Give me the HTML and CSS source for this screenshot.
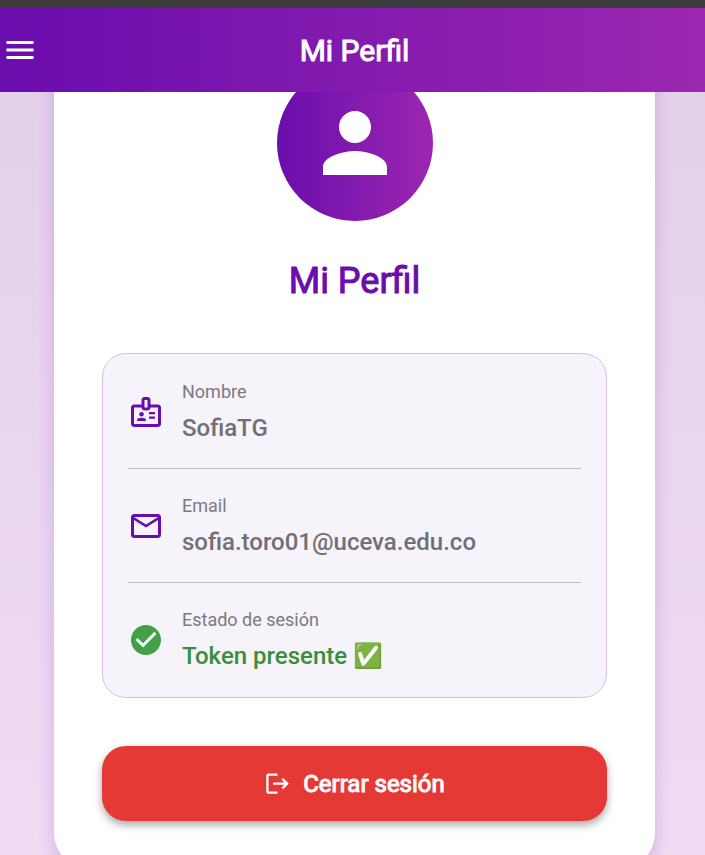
FILE: index.html
```html
<!DOCTYPE html>
<html lang="es">
<head>
<meta charset="utf-8">
<meta name="viewport" content="width=device-width, initial-scale=1">
<title>Mi Perfil</title>
<link rel="stylesheet" href="styles.css">
</head>
<body>
<div class="app">
  <header class="bar">
    <button class="menu" type="button" aria-label="Menú">
      <svg class="icon" viewBox="0 0 24 24"><path d="M3 18h18v-2H3v2zm0-5h18v-2H3v2zm0-7v2h18V6H3z"/></svg>
    </button>
    <h1 class="bar-title">Mi Perfil</h1>
  </header>
  <main class="content">
    <section class="card">
      <div class="avatar">
        <svg class="avatar-icon" viewBox="0 0 24 24"><path d="M12 12c2.21 0 4-1.79 4-4s-1.79-4-4-4-4 1.79-4 4 1.79 4 4 4zm0 2c-2.67 0-8 1.34-8 4v2h16v-2c0-2.66-5.33-4-8-4z"/></svg>
      </div>
      <h2 class="name">Mi Perfil</h2>
      <dl class="info">
        <div class="row">
          <svg class="icon" viewBox="0 0 24 24"><path d="M20 7h-5V4c0-1.1-.9-2-2-2h-2c-1.1 0-2 .9-2 2v3H4c-1.1 0-2 .9-2 2v11c0 1.1.9 2 2 2h16c1.1 0 2-.9 2-2V9c0-1.1-.9-2-2-2zm-9-3h2v5h-2V4zm9 16H4V9h5c0 1.1.9 2 2 2h2c1.1 0 2-.9 2-2h5v11z"/><circle cx="9" cy="13.5" r="1.5"/><path d="M11.08 16.18C10.44 15.9 9.74 15.75 9 15.75s-1.44.15-2.08.43C6.36 16.42 6 16.96 6 17.57V18h6v-.43c0-.61-.36-1.15-.92-1.39zM14 12h4v1.5h-4zM14 15h4v1.5h-4z"/></svg>
          <div class="field"><dt>Nombre</dt><dd>SofiaTG</dd></div>
        </div>
        <div class="row">
          <svg class="icon" viewBox="0 0 24 24"><path d="M22 6c0-1.1-.9-2-2-2H4c-1.1 0-2 .9-2 2v12c0 1.1.9 2 2 2h16c1.1 0 2-.9 2-2V6zm-2 0l-8 5-8-5h16zm0 12H4V8l8 5 8-5v10z"/></svg>
          <div class="field"><dt>Email</dt><dd>sofia.toro01@uceva.edu.co</dd></div>
        </div>
        <div class="row ok">
          <svg class="icon" viewBox="0 0 24 24"><path d="M12 2C6.48 2 2 6.48 2 12s4.48 10 10 10 10-4.48 10-10S17.52 2 12 2zm-2 15l-5-5 1.41-1.41L10 14.17l7.59-7.59L19 8l-9 9z"/></svg>
          <div class="field"><dt>Estado de sesión</dt><dd>Token presente ✅</dd></div>
        </div>
      </dl>
      <button class="logout" type="button">
        <svg class="logout-icon" viewBox="0 0 24 24"><path d="M17 7l-1.41 1.41L18.17 11H8v2h10.17l-2.58 2.58L17 17l5-5zM4 5h8V3H4c-1.1 0-2 .9-2 2v14c0 1.1.9 2 2 2h8v-2H4V5z"/></svg>
        Cerrar sesión
      </button>
    </section>
  </main>
</div>
</body>
</html>
```
FILE: styles.css
```css
* {
  box-sizing: border-box;
}

body {
  margin: 0;
  font-family: Roboto, "Noto Color Emoji", sans-serif;
}

h1, h2, dl, dd {
  margin: 0;
}

button {
  border: 0;
  font: inherit;
  cursor: pointer;
}

svg {
  display: block;
  flex: none;
  fill: currentColor;
}

.app {
  display: flex;
  flex-direction: column;
  height: 100vh;
  border-top: 8px solid #3c3c3c;
  background: linear-gradient(#e2cfea, #efdcf3);
}

.bar {
  display: grid;
  grid-template-columns: 48px 1fr 44px;
  align-items: center;
  flex: none;
  height: 84px;
  z-index: 1;
  color: #fff;
  background: linear-gradient(90deg, #6a0dad, #9c27b0);
}

.menu {
  padding: 0 2px;
  color: inherit;
  background: none;
}

.icon {
  width: 36px;
  height: 36px;
}

/* Regular letterforms thickened with a stroke */
.bar-title,
.name,
.logout {
  font-weight: 400;
  -webkit-text-stroke: 1px currentColor;
}

.bar-title {
  font-size: 30px;
  text-align: center;
}

.content {
  flex: 1;
  min-height: 0;
  padding: 0 50px 0 54px;
  overflow: hidden;
}

.card {
  display: flex;
  flex-direction: column;
  align-items: center;
  max-width: 640px;
  margin: -75px auto 0;
  padding: 48px;
  border-radius: 36px;
  background: #fff;
  box-shadow: 0 8px 18px rgba(106, 13, 173, 0.2);
}

.avatar {
  display: grid;
  place-items: center;
  width: 156px;
  height: 156px;
  border-radius: 50%;
  color: #fff;
  background: linear-gradient(90deg, #6a0dad, #9c27b0);
}

.avatar-icon {
  width: 96px;
  height: 96px;
}

.name {
  margin: 36px 0 48px;
  font-size: 36px;
  line-height: 48px;
  color: #6a0dad;
}

.info {
  width: 100%;
  padding: 19px 25px 18px;
  border: 1px solid #d6c0ea;
  border-radius: 24px;
  background: #f6f3fa;
}

.row {
  display: flex;
  align-items: center;
  gap: 18px;
  height: 78px;
  color: #6a0dad;
}

.row + .row {
  height: 97px;
  margin-top: 17px;
  padding-top: 18px;
  border-top: 1px solid #c5bdc9;
}

.field {
  padding-top: 2px;
}

.field dt {
  margin-bottom: 6px;
  font-size: 18px;
  line-height: 24px;
  color: #7d7a7e;
}

.field dd {
  font-size: 24px;
  font-weight: 500;
  line-height: 36px;
  color: #717075;
}

.ok {
  color: #43a047;
}

.ok dd {
  color: #388e3c;
}

.logout {
  display: flex;
  align-items: center;
  justify-content: center;
  gap: 12px;
  width: 100%;
  height: 75px;
  margin-top: 48px;
  border-radius: 24px;
  color: #fff;
  background: #e53935;
  font-size: 24px;
  box-shadow: 0 4px 8px rgba(0, 0, 0, 0.35);
}

.logout-icon {
  width: 27px;
  height: 27px;
}
```
